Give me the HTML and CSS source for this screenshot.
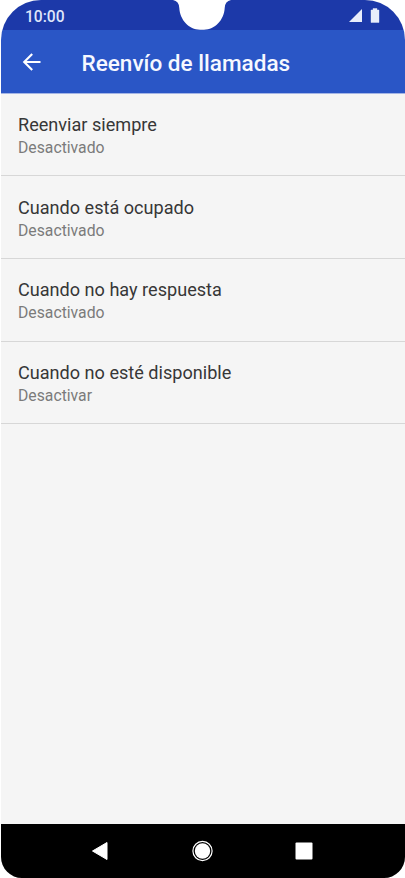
FILE: index.html
```html
<!DOCTYPE html>
<html lang="es">
<head>
<meta charset="utf-8">
<meta name="viewport" content="width=device-width">
<title>Reenvío de llamadas</title>
<link rel="stylesheet" href="styles.css">
</head>
<body>
<div class="phone">
  <div class="status">
    <span class="time">10:00</span>
    <svg class="notch" width="60" height="30" viewBox="0 0 60 30"><path d="M1 0Q7 1 7.3 8C8 20 17 29.7 28 29.7H32C43 29.7 52 20 52.7 8Q53 1 59 0Z" fill="#fff"/></svg>
    <svg class="signals" width="32" height="16" viewBox="0 0 32 16"><path d="M1 14L14 1V14Z" fill="#e9edfb"/><path d="M23 2H25V.5H29V2H31V14.5H23Z" fill="#e9edfb" stroke="#e9edfb" stroke-width=".4" stroke-linejoin="round"/></svg>
  </div>
  <header class="appbar">
    <svg class="back" width="20" height="20" viewBox="0 0 20 20"><path d="M18.5 10H2.5M10.2 2L2.2 10L10.2 18" fill="none" stroke="#fff" stroke-width="2.1"/></svg>
    <h1 class="title">Reenvío de llamadas</h1>
  </header>
  <main class="list">
    <div class="row"><div class="name">Reenviar siempre</div><div class="state">Desactivado</div></div>
    <div class="row"><div class="name">Cuando está ocupado</div><div class="state">Desactivado</div></div>
    <div class="row"><div class="name">Cuando no hay respuesta</div><div class="state">Desactivado</div></div>
    <div class="row"><div class="name">Cuando no esté disponible</div><div class="state">Desactivar</div></div>
  </main>
  <nav class="nav">
    <svg width="20" height="20" viewBox="0 0 20 20"><path d="M2.5 10L17 1.5V18.5Z" fill="#fff" stroke="#fff" stroke-linejoin="round"/></svg>
    <svg width="22" height="22" viewBox="0 0 22 22"><circle cx="11.5" cy="11" r="9.6" fill="none" stroke="#fff" stroke-width="1.2"/><circle cx="11.5" cy="11" r="7.7" fill="#fff"/></svg>
    <svg width="20" height="20" viewBox="0 0 20 20"><rect x="1.5" y="1.5" width="17" height="17" rx="1" fill="#fff"/></svg>
  </nav>
</div>
</body>
</html>
```
FILE: styles.css
```css
body {
  margin: 0;
  background: #fff;
  font-family: Roboto, "Liberation Sans", sans-serif;
}

.phone {
  display: flex;
  flex-direction: column;
  box-sizing: border-box;
  width: 404px;
  height: 878px;
  margin-left: .5px;
  overflow: hidden;
  border-radius: 40px 40px 21px 21px;
  background: #f5f5f5;
}

.status {
  position: relative;
  display: flex;
  flex: none;
  align-items: center;
  justify-content: space-between;
  box-sizing: border-box;
  height: 30px;
  padding: 2px 24.5px 0 24.5px;
  background: #1c39a9;
}

.time {
  padding-top: 1px;
  color: #dfe5fa;
  font-size: 15.6px;
  font-weight: 500;
  line-height: 28px;
}

.notch {
  position: absolute;
  top: 0;
  left: 171.5px;
}

.appbar {
  display: flex;
  flex: none;
  align-items: center;
  box-sizing: border-box;
  height: 64px;
  padding: 1px 21px 0;
  border-bottom: 1px solid #a4b5e5;
  background: #2a56c6;
}

.title {
  margin: 0 0 0 40px;
  padding-top: 3px;
  color: #f6f8ff;
  font-size: 22.55px;
  font-weight: 500;
  line-height: 30px;
  white-space: nowrap;
}

.list {
  flex: 1;
}

.row {
  box-sizing: border-box;
  height: 83px;
  padding: 19px 17.5px 0;
  border-bottom: 1px solid #d7d7d7;
}

.row:first-child,
.row:last-child {
  height: 82px;
}

.row:nth-child(2) {
  padding-top: 20px;
}

.name {
  color: #373737;
  font-size: 18.1px;
  line-height: 24px;
}

.state {
  color: #7b7b7b;
  font-size: 15.75px;
  line-height: 22px;
}

.nav {
  display: flex;
  flex: none;
  align-items: center;
  justify-content: space-between;
  height: 54px;
  padding: 0 90.5px 0 89.5px;
  background: #000;
}
```
